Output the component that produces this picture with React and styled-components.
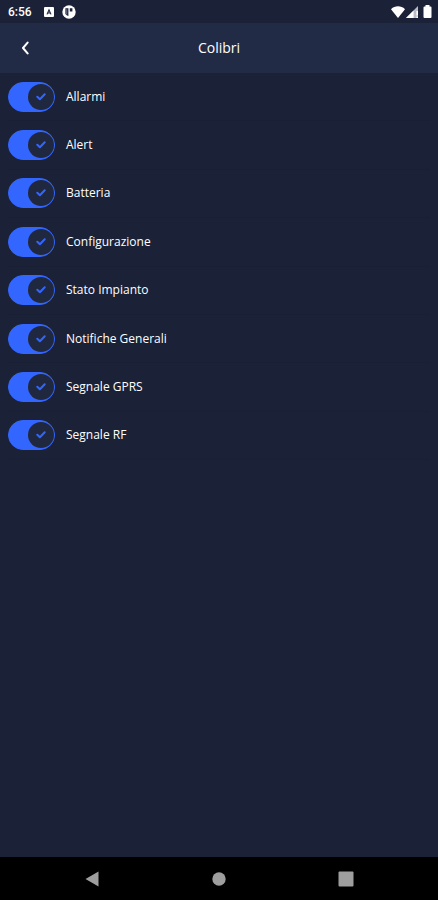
import { useState } from 'react';
import styled, { createGlobalStyle } from 'styled-components';

const GlobalStyle = createGlobalStyle`
    *{
        box-sizing: border-box;
    }
    body{
        margin: 0;
        background-color: #1b2237;
        color: #fff;
        font-family: "Open Sans", "Noto Sans", sans-serif;
    }
`

const Screen = styled.div`
    display: flex;
    flex-direction: column;
    min-height: 100vh;
`

const StatusBar = styled.div`
    display: flex;
    align-items: center;
    justify-content: space-between;
    height: 23px;
    padding: 0 6px 0 8px;
    svg{
        display: block;
    }
`

const StatusGroup = styled.div`
    display: flex;
    align-items: center;
    gap: ${props => props.$gap};
`

const Clock = styled.span`
    font-family: Roboto, sans-serif;
    font-size: 12px;
    font-weight: 500;
    line-height: 16px;
    margin-right: 4px;
`

const Header = styled.header`
    display: grid;
    grid-template-columns: 50px 1fr 50px;
    align-items: center;
    height: 50px;
    background-color: #222b45;
`

const BackButton = styled.button`
    display: flex;
    align-items: center;
    justify-content: center;
    height: 50px;
    padding: 0;
    border: 0;
    background: none;
    color: #fff;
    cursor: pointer;
`

const Title = styled.h1`
    margin: 0;
    font-size: 14px;
    font-weight: 400;
    line-height: 20px;
    text-align: center;
`

const List = styled.ul`
    display: grid;
    grid-auto-rows: 1fr;
    min-height: 387px;
    margin: 0;
    padding: 0 8px;
    list-style: none;
`

const Row = styled.li`
    display: flex;
    align-items: center;
    border-bottom: 1px solid #192036;
`

const ToggleLabel = styled.label`
    display: flex;
    align-items: center;
    gap: 11px;
    font-size: 12px;
    line-height: 16px;
    cursor: pointer;
`

const ToggleInput = styled.input`
    position: absolute;
    opacity: 0;
    width: 47px;
    height: 30px;
    margin: 0;
    cursor: pointer;
`

const Track = styled.span`
    display: flex;
    align-items: center;
    justify-content: ${props => props.$on ? 'flex-end' : 'flex-start'};
    width: 47px;
    height: 30px;
    border: 1px solid #3366ff;
    border-radius: 15px;
    background-color: ${props => props.$on ? '#3366ff' : 'transparent'};
`

const Knob = styled.span`
    display: flex;
    align-items: center;
    justify-content: center;
    width: 26px;
    height: 26px;
    border-radius: 50%;
    background-color: #20283f;
`

const NavBar = styled.nav`
    display: flex;
    align-items: center;
    justify-content: center;
    gap: 83px;
    height: 43px;
    margin-top: auto;
    background-color: #000;
`

const NavButton = styled.button`
    display: flex;
    align-items: center;
    justify-content: center;
    width: 44px;
    height: 43px;
    padding: 0;
    border: 0;
    background: none;
    color: #9e9e9e;
    cursor: pointer;
`

const notifications = [
    'Allarmi',
    'Alert',
    'Batteria',
    'Configurazione',
    'Stato Impianto',
    'Notifiche Generali',
    'Segnale GPRS',
    'Segnale RF',
];

const Toggle = ({ label }) => {
    const [on, setOn] = useState(true);
    return (
        <ToggleLabel>
            <ToggleInput type="checkbox" checked={on} onChange={() => setOn(!on)} />
            <Track $on={on}>
                <Knob>
                    {on && (
                        <svg width="10" height="8" viewBox="0 0 10 8" fill="none" stroke="#3366ff" strokeWidth="2" strokeLinecap="round" strokeLinejoin="round">
                            <path d="M1.3 3.8 3.9 6.2 8.7 1.2" />
                        </svg>
                    )}
                </Knob>
            </Track>
            {label}
        </ToggleLabel>
    );
};

const App = () => {
    return (
        <Screen>
            <GlobalStyle />
            <StatusBar>
                <StatusGroup $gap="8px">
                    <Clock>6:56</Clock>
                    <svg width="10" height="10" viewBox="0 0 10 10">
                        <rect width="10" height="10" rx="1" fill="#fff" />
                        <path d="M3 7.4 5 2.8 7 7.4M3.7 6H6.3" fill="none" stroke="#1a2138" strokeWidth="1.1" />
                    </svg>
                    <svg width="14" height="14" viewBox="0 0 14 14">
                        <circle cx="7" cy="7" r="6.7" fill="#fff" />
                        <path d="M3.4 3.2H6.4V10.9A4.6 4.6 0 0 1 3.4 9ZM7.8 3.2H10.4V6.6H7.8Z" fill="#1a2138" />
                        <path d="M4.4 4.3H5.2V9.4H4.4Z" fill="#8a8fa0" />
                    </svg>
                </StatusGroup>
                <StatusGroup $gap="1px">
                    <svg width="14" height="12" viewBox="0 0 14 12">
                        <path d="M0 3.2C4-.6 10-.6 14 3.2L7 12Z" fill="#fff" />
                    </svg>
                    <svg width="12" height="12" viewBox="0 0 12 12">
                        <path d="M12 0V12H0Z" fill="#b9bcc6" />
                        <path d="M7.6 4.4V12H0ZM10.4 5H12V9.4H10.4ZM10.4 10.4H12V12H10.4Z" fill="#fff" />
                    </svg>
                    <svg width="13" height="13" viewBox="0 0 13 13">
                        <path d="M6.5 0H10.5V1.4H11.5Q12.5 1.4 12.5 2.4V12Q12.5 13 11.5 13H5.5Q4.5 13 4.5 12V2.4Q4.5 1.4 5.5 1.4H6.5Z" fill="#fff" />
                    </svg>
                </StatusGroup>
            </StatusBar>
            <Header>
                <BackButton aria-label="Indietro">
                    <svg width="8" height="14" viewBox="0 0 8 14" fill="none" stroke="currentColor" strokeWidth="2" strokeLinecap="round" strokeLinejoin="round">
                        <path d="M6.6 1.6 2 7 6.6 12.4" />
                    </svg>
                </BackButton>
                <Title>Colibri</Title>
            </Header>
            <List>
                {notifications.map(label => (
                    <Row key={label}>
                        <Toggle label={label} />
                    </Row>
                ))}
            </List>
            <NavBar>
                <NavButton aria-label="Back">
                    <svg width="14" height="16" viewBox="0 0 14 16">
                        <path d="M13.5.5V15.5L.5 8Z" fill="currentColor" />
                    </svg>
                </NavButton>
                <NavButton aria-label="Home">
                    <svg width="14" height="14" viewBox="0 0 14 14">
                        <circle cx="7" cy="7" r="6.7" fill="currentColor" />
                    </svg>
                </NavButton>
                <NavButton aria-label="Recents">
                    <svg width="16" height="16" viewBox="0 0 16 16">
                        <rect x=".5" y=".5" width="15" height="15" rx="1" fill="currentColor" />
                    </svg>
                </NavButton>
            </NavBar>
        </Screen>
    );
};

export default App;
